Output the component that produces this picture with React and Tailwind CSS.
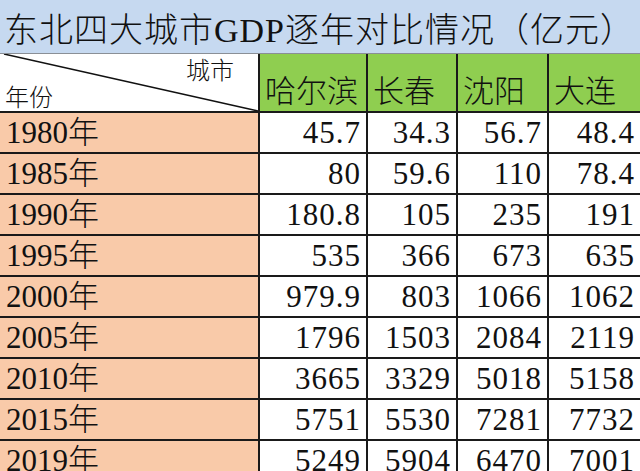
import React from "react"

const cities = ["哈尔滨", "长春", "沈阳", "大连"]

const rows = [
  ["1980年", "45.7", "34.3", "56.7", "48.4"],
  ["1985年", "80", "59.6", "110", "78.4"],
  ["1990年", "180.8", "105", "235", "191"],
  ["1995年", "535", "366", "673", "635"],
  ["2000年", "979.9", "803", "1066", "1062"],
  ["2005年", "1796", "1503", "2084", "2119"],
  ["2010年", "3665", "3329", "5018", "5158"],
  ["2015年", "5751", "5530", "7281", "7732"],
  ["2019年", "5249", "5904", "6470", "7001"],
]

const font = { fontFamily: '"Liberation Serif", "Noto Sans CJK SC", serif' }

const App = () => {
  return (
    <div className="w-[640px] h-[471px] overflow-hidden bg-white text-[#111]" style={font}>
      <div className="h-[54px] bg-[#c6d9f0] border-b border-[#8a8f96] flex items-end pl-[4px] pb-[2px]">
        <div className="text-[34px] leading-[40px] tracking-[1px] font-light whitespace-nowrap">
          东北四大城市<span className="font-normal">GDP</span>逐年对比情况（亿元）
        </div>
      </div>
      <div className="grid grid-cols-[260px_108px_90px_91px_91px]">
        <div className="relative h-[59px] bg-white border-b-2 border-r-2 border-[#1a1a1a]">
          <svg className="absolute inset-0" width="258" height="57">
            <line x1="4" y1="0" x2="258" y2="57" stroke="#111" strokeWidth="1.5" />
          </svg>
          <span className="absolute left-[186px] top-[3px] text-[24px] leading-[28px] font-light">城市</span>
          <span className="absolute left-[5px] top-[30px] text-[24px] leading-[28px] font-light">年份</span>
        </div>
        {cities.map((c, i) => (
          <div
            key={c}
            className={`h-[59px] bg-[#8fce50] border-b-2 border-[#1a1a1a] flex items-end pl-[5px] pb-[1px] ${
              i < 3 ? "border-r-2" : ""
            }`}
          >
            <span className="text-[31px] leading-[36px] font-light whitespace-nowrap">{c}</span>
          </div>
        ))}
        {rows.map(row => (
          <React.Fragment key={row[0]}>
            <div className="h-[41px] bg-[#f9caa9] border-b-2 border-r-2 border-[#1a1a1a] flex items-center pl-[6px]">
              <span className="text-[31px] leading-[36px]">
                {row[0].slice(0, 4)}
                <span className="font-light">年</span>
              </span>
            </div>
            {row.slice(1).map((v, i) => (
              <div
                key={i}
                className={`h-[41px] bg-white border-b-2 border-[#1a1a1a] flex items-center justify-end pr-[5px] ${
                  i < 3 ? "border-r-2" : ""
                }`}
              >
                <span className="text-[31px] leading-[36px] tracking-[1px]">{v}</span>
              </div>
            ))}
          </React.Fragment>
        ))}
      </div>
    </div>
  )
}

export default App
